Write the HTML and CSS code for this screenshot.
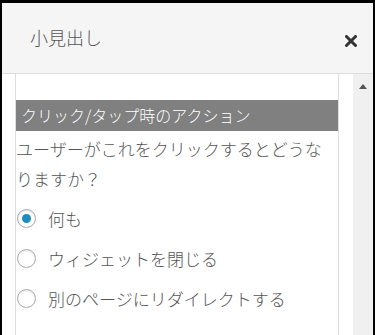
FILE: index.html
```html
<!DOCTYPE html>
<html lang="ja">
<head>
  <meta charset="UTF-8">
  <title>小見出し</title>
  <link rel="stylesheet" href="styles.css">
</head>
<body>
  <div class="modal">
    <div class="modal-header">
      <span class="modal-title">小見出し</span>
      <button class="close-button" aria-label="閉じる">
        <svg width="12" height="12" viewBox="0 0 12 12">
          <path d="M1.5 1.5 L10.5 10.5 M10.5 1.5 L1.5 10.5" stroke="#333" stroke-width="3" stroke-linecap="round"/>
        </svg>
      </button>
    </div>
    <div class="modal-body">
      <div class="panel">
        <div class="section-title">クリック/タップ時のアクション</div>
        <p class="question">ユーザーがこれをクリックするとどうなりますか？</p>
        <div class="options">
          <label class="option"><span class="radio checked"></span>何も</label>
          <label class="option"><span class="radio"></span>ウィジェットを閉じる</label>
          <label class="option"><span class="radio"></span>別のページにリダイレクトする</label>
        </div>
      </div>
      <div class="scrollbar">
        <span class="arrow-up"></span>
      </div>
    </div>
  </div>
</body>
</html>
```

FILE: styles.css
```css
html, body {
  margin: 0;
  height: 100%;
  background: #000;
  overflow: hidden;
}
body {
  padding: 3px 2px 0 2px;
  box-sizing: border-box;
  font-family: "Noto Sans CJK JP", "Noto Sans", sans-serif;
  font-weight: 300;
  color: #555;
}
.modal {
  background: #fff;
  height: 100%;
  display: flex;
  flex-direction: column;
}
.modal-header {
  height: 70px;
  background: #f5f5f5;
  border-bottom: 1px solid #ddd;
  display: flex;
  align-items: center;
  padding: 0 16px 0 28px;
  flex-shrink: 0;
}
.modal-title {
  font-size: 18px;
  color: #555;
  flex: 1;
  margin-top: -3px;
}
.close-button {
  border: none;
  background: none;
  padding: 0;
  width: 12px;
  height: 12px;
  margin-top: 5px;
  cursor: pointer;
}
.close-button svg {
  display: block;
}
.modal-body {
  flex: 1;
  display: flex;
  padding-left: 13px;
}
.panel {
  width: 322px;
  border-left: 1px solid #ddd;
  border-right: 1px solid #ddd;
  padding-top: 26px;
}
.section-title {
  background: #808080;
  color: #fff;
  font-size: 16px;
  height: 31px;
  line-height: 31px;
  padding-left: 5px;
}
.question {
  margin: 3px 0 0;
  font-size: 17px;
  line-height: 30px;
}
.options {
  margin-top: 4px;
}
.option {
  display: flex;
  align-items: center;
  height: 40px;
  font-size: 17px;
  cursor: pointer;
}
.radio {
  width: 19px;
  height: 19px;
  border: 1px solid #a7aaad;
  border-radius: 50%;
  box-sizing: border-box;
  box-shadow: inset 0 1px 2px rgba(0,0,0,0.12);
  margin: 0 12px 0 1px;
  display: flex;
  align-items: center;
  justify-content: center;
}
.radio.checked::after {
  content: "";
  width: 9px;
  height: 9px;
  border-radius: 50%;
  background: #1e8cbe;
}
.scrollbar {
  width: 20px;
  margin-left: auto;
  background: #f0f0f0;
  display: flex;
  justify-content: center;
}
.arrow-up {
  width: 0;
  height: 0;
  margin-top: 10px;
  border-left: 4px solid transparent;
  border-right: 4px solid transparent;
  border-bottom: 5px solid #555;
}
```
